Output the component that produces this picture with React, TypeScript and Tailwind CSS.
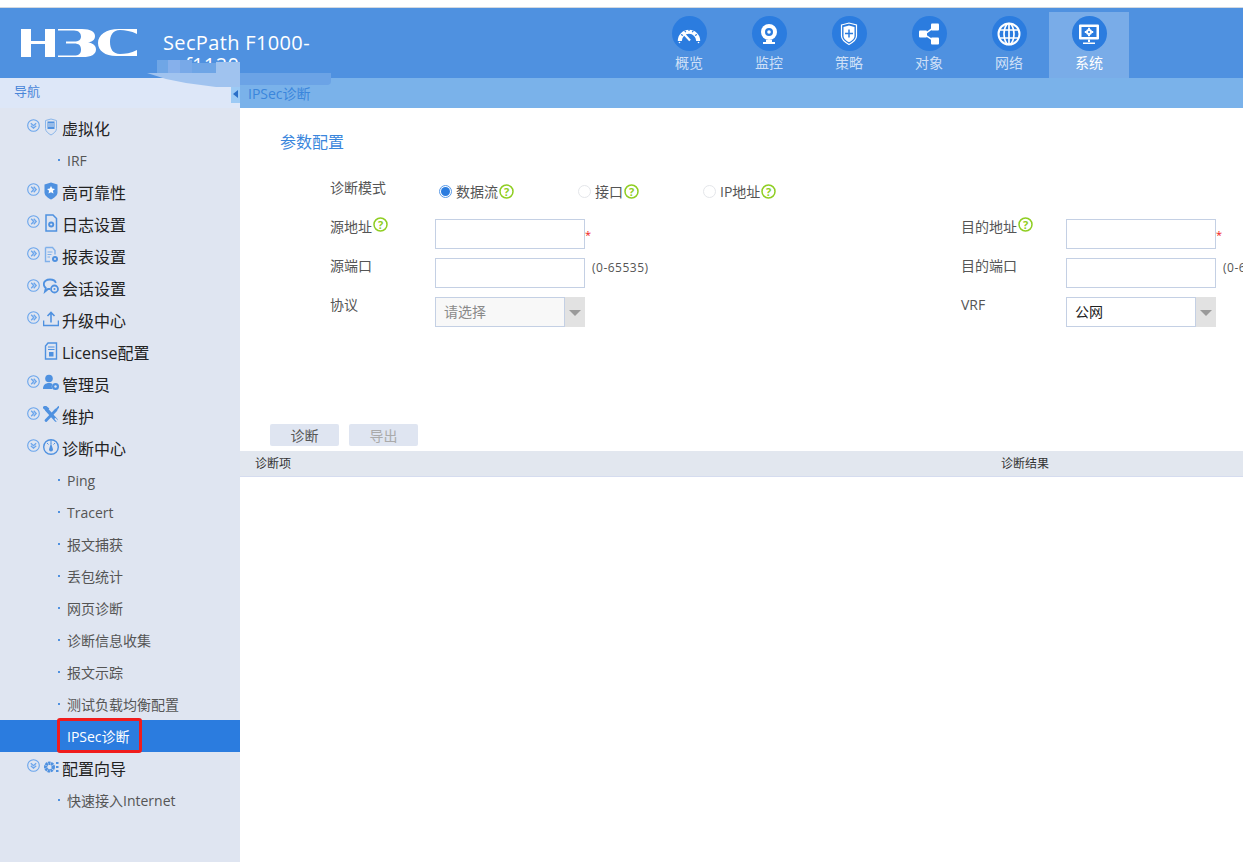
import type { ReactNode } from 'react';

const FONT = 'font-["Open_Sans","Noto_Sans_CJK_SC",sans-serif]';

function Logo() {
  return (
    <svg width="118" height="30" viewBox="0 0 118 30" fill="#fff">
      <path d="M1 1h10v12h14V1h10v28H25V16H11v13H1z" />
      <path d="M38 1h24c9 0 13 3 13 7 0 4-3 6-7 6.500 5 .5 8 3 8 7 0 5-5 7.500-13 7.500H38v-1.500h16c5 0 7-2 7-6s-2-6-7-6H46v-2h8c5 0 7-2 7-5s-2-6-7-6H38z" />
      <path d="M117 1v5c-6-3-12-4-17-4-7 0-10 5-10 12s3 12 10 12c5 0 11-1 17-4v6H99C86 29 78 23 78 15S86 1 99 1z" />
    </svg>
  );
}

function TopIcon({ name }: { name: string }) {
  const p = { fill: 'none', stroke: '#fff', strokeWidth: 1.6 };
  return (
    <span className="flex h-[35px] w-[35px] items-center justify-center rounded-full bg-[#2b7cdf]">
      <svg width="24" height="24" viewBox="0 0 24 24">
        {name === 'gauge' && (
          <g>
            <path d="M.8 19a11.200 11.200 0 1 1 22.400 0h-4a7.200 7.200 0 0 0-14.400 0z" fill="#fff" />
            <path d="M4 12.500l2 1M7.500 8.500l1.300 1.700M12 7v2M16.500 8.500l-1.300 1.700M20 12.500l-2 1" stroke="#2b7cdf" strokeWidth="1.200" />
            <path d="M13 18.500 7.500 12.500" stroke="#fff" strokeWidth="2.200" />
            <circle cx="2.500" cy="20.500" r=".8" fill="#fff" />
            <circle cx="21.500" cy="20.500" r=".8" fill="#fff" />
          </g>
        )}
        {name === 'cam' && (
          <g>
            <circle cx="12" cy="10" r="8" fill="#fff" />
            <circle cx="12" cy="10" r="4" fill="#2b7cdf" />
            <circle cx="12" cy="10" r="1.800" fill="#fff" />
            <path d="M9 18h6v2h3v2H6v-2h3z" fill="#fff" />
          </g>
        )}
        {name === 'shield' && (
          <g {...p}>
            <path d="M4.500 3 12 1l7.500 2v11c0 4-4 6.500-7.500 8.500C8.500 20.500 4.500 18 4.500 14z" strokeWidth="1.200" />
            <path d="M6.500 5 12 3.500 17.500 5v9c0 3-3 5-5.500 6.300C9.500 19 6.500 17 6.500 14z" fill="#fff" stroke="none" />
            <path d="M12 7.500v8M8 11.500h8" stroke="#2b7cdf" strokeWidth="1.500" />
          </g>
        )}
        {name === 'share' && (
          <g fill="#fff">
            <rect x="14" y="1.500" width="8" height="7" rx="1" />
            <rect x="14" y="15.500" width="8" height="7" rx="1" />
            <rect x="2" y="8.500" width="8" height="7" rx="1" />
            <path d="M8 11 16 5l.800 1.200-8 6zM8 12l9 6-.8 1.200-9-6z" />
          </g>
        )}
        {name === 'globe' && (
          <g {...p} strokeWidth="1.700">
            <circle cx="12" cy="12" r="10.500" strokeWidth="2" />
            <ellipse cx="12" cy="12" rx="5" ry="10.500" />
            <path d="M12 1.500v21M2 8h20M2 16h20" />
          </g>
        )}
        {name === 'monitor' && (
          <g fill="#fff">
            <path d="M3 2.500h18a1 1 0 0 1 1 1v13a1 1 0 0 1-1 1H3a1 1 0 0 1-1-1v-13a1 1 0 0 1 1-1zm1.500 2.500v10h15V5z" fillRule="evenodd" />
            <circle cx="12" cy="10" r="3" />
            <circle cx="12" cy="10" r="1.100" fill="#2b7cdf" />
            <path d="M11 5.800h2v1.500h-2zM11 12.700h2v1.500h-2zM7.800 9h1.500v2H7.800zM14.700 9h1.500v2h-1.500z" />
            <path d="M11 17.500h2V20h-2zM6 20.500h12V22H6z" />
          </g>
        )}
      </svg>
    </span>
  );
}

function Toggle({ open }: { open?: boolean }) {
  return (
    <svg width="13" height="13" viewBox="0 0 13 13" fill="none" stroke="#6aa5ec" className="shrink-0">
      <circle cx="6.500" cy="6.500" r="5.800" strokeWidth="1.100" />
      {open ? (
        <path d="M3.800 4.200 6.500 6.700l2.700-2.500M3.800 6.700 6.500 9.200l2.700-2.500" strokeWidth="1.300" />
      ) : (
        <path d="M4.200 3.800 6.700 6.500 4.200 9.200M6.700 3.800 9.200 6.500 6.700 9.200" strokeWidth="1.300" />
      )}
    </svg>
  );
}

function MenuIcon({ name }: { name: string }) {
  const c = '#4f91e0';
  return (
    <svg width="16" height="18" viewBox="0 0 16 18" className="shrink-0" fill="none" stroke={c}>
      {name === 'vm' && (
        <g>
          <path d="M2.500 2.500 8 1l5.500 1.500v8c0 3-3 5-5.500 6.500-2.500-1.500-5.500-3.500-5.500-6.500z" stroke="#8ab6ea" />
          <rect x="4.500" y="3.500" width="7" height="7.500" fill={c} stroke="none" />
          <path d="M6 5v4M8 5v4M10 5v4" stroke="#dfe5f1" />
        </g>
      )}
      {name === 'ha' && (
        <g>
          <path d="M1.500 2.500 8 .5l6.500 2v8c0 3-3.500 5.500-6.500 7-3-1.500-6.500-4-6.500-7z" fill={c} stroke="none" />
          <path d="m8 4 1.200 2.600 2.800.3-2.100 1.900.6 2.800L8 10.200l-2.500 1.400.6-2.800L4 6.900l2.800-.3z" fill="#fff" stroke="none" />
        </g>
      )}
      {name === 'log' && (
        <g>
          <path d="M3 1h7l3.500 3.500V17H3z" strokeWidth="1.500" />
          <circle cx="8.200" cy="10.500" r="3" fill={c} stroke="none" />
          <circle cx="8.200" cy="10.500" r="1.100" fill="#dfe5f1" stroke="none" />
        </g>
      )}
      {name === 'report' && (
        <g>
          <path d="M2.500 1.500h7l2.500 3v4M7 15.500H2.500v-14" strokeWidth="1.400" stroke="#7fb0ea" />
          <path d="M4.500 6h5M4.500 8.500h4M4.500 11h2.500" stroke="#7fb0ea" />
          <circle cx="12" cy="13" r="3" fill={c} stroke="none" />
          <circle cx="12" cy="13" r="1" fill="#dfe5f1" stroke="none" />
        </g>
      )}
      {name === 'session' && (
        <g>
          <path d="M7 11H5l-3 2.500.8-3.500C1.500 9 .8 7.500.8 6c0-2.800 2.700-4.500 6.200-4.500 3 0 5.300 1.300 5.800 3.500" strokeWidth="1.800" />
          <circle cx="11.500" cy="11" r="3.500" strokeWidth="1.800" />
          <circle cx="11.500" cy="11" r="1" fill={c} stroke="none" />
        </g>
      )}
      {name === 'upload' && (
        <path d="M8 12.500V2.500M4.500 6 8 2.500 11.500 6M.5 10.500v5h15v-5" strokeWidth="1.600" />
      )}
      {name === 'license' && (
        <g>
          <path d="M5 1h8.500v16h-11V4z" strokeWidth="1.400" />
          <path d="M5 5h6.500M5 7.500h6.500" />
          <rect x="6" y="10" width="4.500" height="4.500" fill={c} stroke="none" />
        </g>
      )}
      {name === 'admin' && (
        <g fill={c} stroke="none">
          <circle cx="6" cy="4.500" r="3.800" />
          <path d="M0 15c0-4 2.500-6 6-6 1.500 0 2.500.3 3.500 1-1 1.500-1 3.500 0 5z" />
          <circle cx="12.500" cy="12.500" r="3.500" />
          <circle cx="12.500" cy="12.500" r="1.200" fill="#dfe5f1" />
        </g>
      )}
      {name === 'tools' && (
        <g stroke={c} strokeLinecap="round">
          <path d="M3.500 3.500 13 14" strokeWidth="3.400" />
          <path d="M13 4 3 14.500" strokeWidth="2.800" />
          <path d="M.5 1.500 3.500 4l1.500-1.500L2.500.5zM15.500 1 13 4" strokeWidth="1.800" />
          <path d="M15.500 16.500 12.500 13" strokeWidth="1.800" stroke="#dfe5f1" />
        </g>
      )}
      {name === 'diag' && (
        <g>
          <circle cx="8" cy="9" r="7.300" strokeWidth="1.400" />
          <path d="M8 2v4M4 5l1.500 1.500M12 5l-1.500 1.500" />
          <path d="M8 5l2 6.500a2 2 0 0 1-4 0z" fill={c} stroke="none" />
        </g>
      )}
      {name === 'wizard' && (
        <g>
          <circle cx="6.500" cy="9" r="3.800" strokeWidth="3.400" strokeDasharray="2.200 .5" />
          <path d="M13 5h2.500M13 9h2.500M13 13h2.500" strokeWidth="1.800" />
        </g>
      )}
    </svg>
  );
}

type MenuRow = { label: string; icon?: string; open?: boolean; child?: boolean; active?: boolean; noToggle?: boolean };

const MENU: MenuRow[] = [
  { label: '虚拟化', icon: 'vm', open: true },
  { label: 'IRF', child: true },
  { label: '高可靠性', icon: 'ha' },
  { label: '日志设置', icon: 'log' },
  { label: '报表设置', icon: 'report' },
  { label: '会话设置', icon: 'session' },
  { label: '升级中心', icon: 'upload' },
  { label: 'License配置', icon: 'license', noToggle: true },
  { label: '管理员', icon: 'admin' },
  { label: '维护', icon: 'tools' },
  { label: '诊断中心', icon: 'diag', open: true },
  { label: 'Ping', child: true },
  { label: 'Tracert', child: true },
  { label: '报文捕获', child: true },
  { label: '丢包统计', child: true },
  { label: '网页诊断', child: true },
  { label: '诊断信息收集', child: true },
  { label: '报文示踪', child: true },
  { label: '测试负载均衡配置', child: true },
  { label: 'IPSec诊断', child: true, active: true },
  { label: '配置向导', icon: 'wizard', open: true },
  { label: '快速接入Internet', child: true },
];

const TABS = [
  { label: '概览', icon: 'gauge' },
  { label: '监控', icon: 'cam' },
  { label: '策略', icon: 'shield' },
  { label: '对象', icon: 'share' },
  { label: '网络', icon: 'globe' },
  { label: '系统', icon: 'monitor', active: true },
];

function Help() {
  return (
    <svg width="15" height="15" viewBox="0 0 15 15" fill="none" stroke="#8fce22" className="ml-[1px] shrink-0">
      <circle cx="7.500" cy="7.500" r="6.500" strokeWidth="1.500" />
      <text x="7.500" y="11.500" textAnchor="middle" fontSize="11" fontWeight="700" fill="#8fce22" stroke="none">
        ?
      </text>
    </svg>
  );
}

function Radio({ checked }: { checked?: boolean }) {
  return (
    <span
      className={`flex h-[13px] w-[13px] shrink-0 items-center justify-center rounded-full border ${
        checked ? 'border-[#5b9be8]' : 'border-[#e4e6ea]'
      }`}
    >
      {checked && <span className="h-[9px] w-[9px] rounded-full bg-[#2b7cdf]" />}
    </span>
  );
}

function Field({ suffix }: { suffix?: ReactNode }) {
  return (
    <div className="flex items-center">
      <div className="h-[30px] w-[150px] shrink-0 border border-[#c4d0e4] bg-white" />
      {suffix}
    </div>
  );
}

function Select({ value, disabled }: { value: string; disabled?: boolean }) {
  return (
    <div className="flex h-[30px] w-[150px]">
      <div
        className={`flex w-[130px] items-center border border-[#c4d0e4] pb-[2px] pl-2 text-[14px] ${
          disabled ? 'bg-[#f8f8f8] text-[#8a8a8a]' : 'bg-white text-[#222]'
        }`}
      >
        {value}
      </div>
      <div className="flex w-[20px] items-center justify-center bg-[#e2e2e2]">
        <span className="mt-[2px] h-0 w-0 border-x-[6px] border-t-[6px] border-x-transparent border-t-[#9a9a9a]" />
      </div>
    </div>
  );
}

const Required = <span className="text-[11px] leading-none text-[#f01818]">*</span>;
const Range = <span className="mb-[11px] ml-[7px] text-[12px] tracking-[.5px] whitespace-nowrap text-[#555]">(0-65535)</span>;

export default function App() {
  return (
    <div className={`${FONT} relative h-[862px] w-[1243px] overflow-hidden bg-white`}>
      <div className="h-[8px] border-b border-[#d3d9e0] bg-white" />

      {/* Header */}
      <header className="flex h-[70px] items-start bg-[#4f91e0]">
        <div className="mt-[20px] ml-[20px]">
          <Logo />
        </div>
        <div className="mt-[24px] ml-[25px] h-[46px] w-[160px] overflow-hidden text-[20px] leading-[22px] tracking-[.35px] whitespace-nowrap text-white">
          SecPath F1000-
          <br />
          <span className="pl-[22px]">f1120</span>
        </div>
        <nav className="mt-[4px] mr-[114px] ml-auto flex">
          {TABS.map((t) => (
            <div
              key={t.label}
              className={`flex h-[66px] w-[80px] flex-col items-center pt-[4px] text-[14px] leading-[20px] ${
                t.active ? 'bg-[#79ace8] text-white' : 'text-[#cfe0f7]'
              }`}
            >
              <TopIcon name={t.icon} />
              <span className="mt-[2px]">{t.label}</span>
            </div>
          ))}
        </nav>
      </header>

      <div className="flex h-[784px]">
        {/* Sidebar */}
        <aside className="w-[240px] shrink-0 bg-[#dfe5f1]">
          <div className="relative flex h-[30px] items-center bg-[#dde7f8] pb-[3px] pl-[14px] text-[13px] text-[#4a86d8]">
            导航
            <div className="absolute top-[7px] right-0 flex h-[18px] w-[9px] items-center justify-center bg-[#9ccaf5]">
              <span className="h-0 w-0 border-y-[4px] border-r-[5px] border-y-transparent border-r-[#2b6fc8]" />
            </div>
          </div>
          <ul className="mt-[4px]">
            {MENU.map((m) => (
              <li
                key={m.label}
                className={`relative flex h-[32px] items-center ${m.active ? 'bg-[#2b7cdf]' : ''}`}
              >
                {m.child ? (
                  <div className={`flex items-center pl-[58px] text-[14px] ${m.active ? 'text-white' : 'text-[#555]'}`}>
                    <span className={`mr-[7px] h-[2px] w-[2px] ${m.active ? 'bg-transparent' : 'bg-[#4f91e0]'}`} />
                    {m.label}
                  </div>
                ) : (
                  <div className="flex items-center pl-[27px] text-[16px] text-[#222]">
                    <span className="mt-[-5px] w-[13px]">{!m.noToggle && <Toggle open={m.open} />}</span>
                    <span className="mt-[-3px] ml-[3px] w-[16px]">
                      <MenuIcon name={m.icon as string} />
                    </span>
                    <span className="mt-[2px] ml-[3px]">{m.label}</span>
                  </div>
                )}
                {m.active && (
                  <span className="absolute top-[-2px] left-[57px] h-[35px] w-[85px] rounded-[3px] border-[3px] border-[#f01c1c]" />
                )}
              </li>
            ))}
          </ul>
        </aside>

        {/* Main */}
        <main className="relative min-w-0 flex-1">
          <div className="flex h-[30px] items-center bg-[#7ab2ea] pl-[8px]">
            <span className="text-[14px] text-[#3a86dc]">IPSec诊断</span>
          </div>

          <h2 className="mt-[23px] ml-[40px] text-[16px] leading-[22px] font-normal text-[#3a86dc]">参数配置</h2>

          <div className="mt-[25px] grid grid-cols-[105px_526px_105px_1fr] gap-y-[9px] pl-[90px] text-[14px] text-[#555]">
            <div className="col-span-4 flex h-[32px] items-start">
              <div className="w-[109px] leading-[20px]">诊断模式</div>
              <div className="mt-[3px] flex items-center">
                <div className="flex w-[139px] items-center">
                  <Radio checked />
                  <span className="ml-[4px]">数据流</span>
                  <Help />
                </div>
                <div className="flex w-[125px] items-center">
                  <Radio />
                  <span className="ml-[4px]">接口</span>
                  <Help />
                </div>
                <div className="flex items-center">
                  <Radio />
                  <span className="ml-[4px]">IP地址</span>
                  <Help />
                </div>
              </div>
            </div>

            <div className="-mt-[2px] flex items-start leading-[20px]">
              <span>源地址</span>
              <Help />
            </div>
            <Field suffix={Required} />
            <div className="-mt-[2px] flex items-start whitespace-nowrap leading-[20px]">
              <span>目的地址</span>
              <Help />
            </div>
            <Field suffix={Required} />

            <div className="-mt-[2px] leading-[20px]">源端口</div>
            <Field suffix={Range} />
            <div className="-mt-[2px] leading-[20px]">目的端口</div>
            <Field suffix={Range} />

            <div className="-mt-[2px] leading-[20px]">协议</div>
            <Select value="请选择" disabled />
            <div className="-mt-[2px] leading-[20px]">VRF</div>
            <Select value="公网" />
          </div>

          <div className="mt-[97px] flex gap-[10px] pl-[30px] text-[14px]">
            <button className="h-[22px] w-[69px] rounded-[2px] bg-[#dfe5f1] text-[#555]">诊断</button>
            <button className="h-[22px] w-[69px] rounded-[2px] bg-[#dfe5f1] text-[#aaa]">导出</button>
          </div>

          <div className="mt-[5px] grid h-[26px] grid-cols-[761px_1fr] items-center border-b border-[#d5dcef] bg-[#e2e7ef] text-[12px] text-[#333]">
            <span className="pl-[15px]">诊断项</span>
            <span>诊断结果</span>
          </div>
        </main>
      </div>

      {/* mosaic patch that hides part of the device name */}
      <svg className="absolute top-0 left-0" width="340" height="90" viewBox="0 0 340 90">
        <rect x="157" y="60" width="11" height="13" fill="#6fa6e6" />
        <rect x="168" y="60" width="12" height="13" fill="#86b0eb" />
        <rect x="180" y="60" width="12" height="13" fill="#78a9e8" />
        <rect x="192" y="63" width="24" height="10" fill="#6ea5e6" />
        <path d="M147 73h69v-11h24v25h-24l-30-4-20-4z" fill="#a0c3ef" />
        <path d="M240 73h91v8q0 4-4 4h-87z" fill="#6ba3e6" />
      </svg>
    </div>
  );
}
